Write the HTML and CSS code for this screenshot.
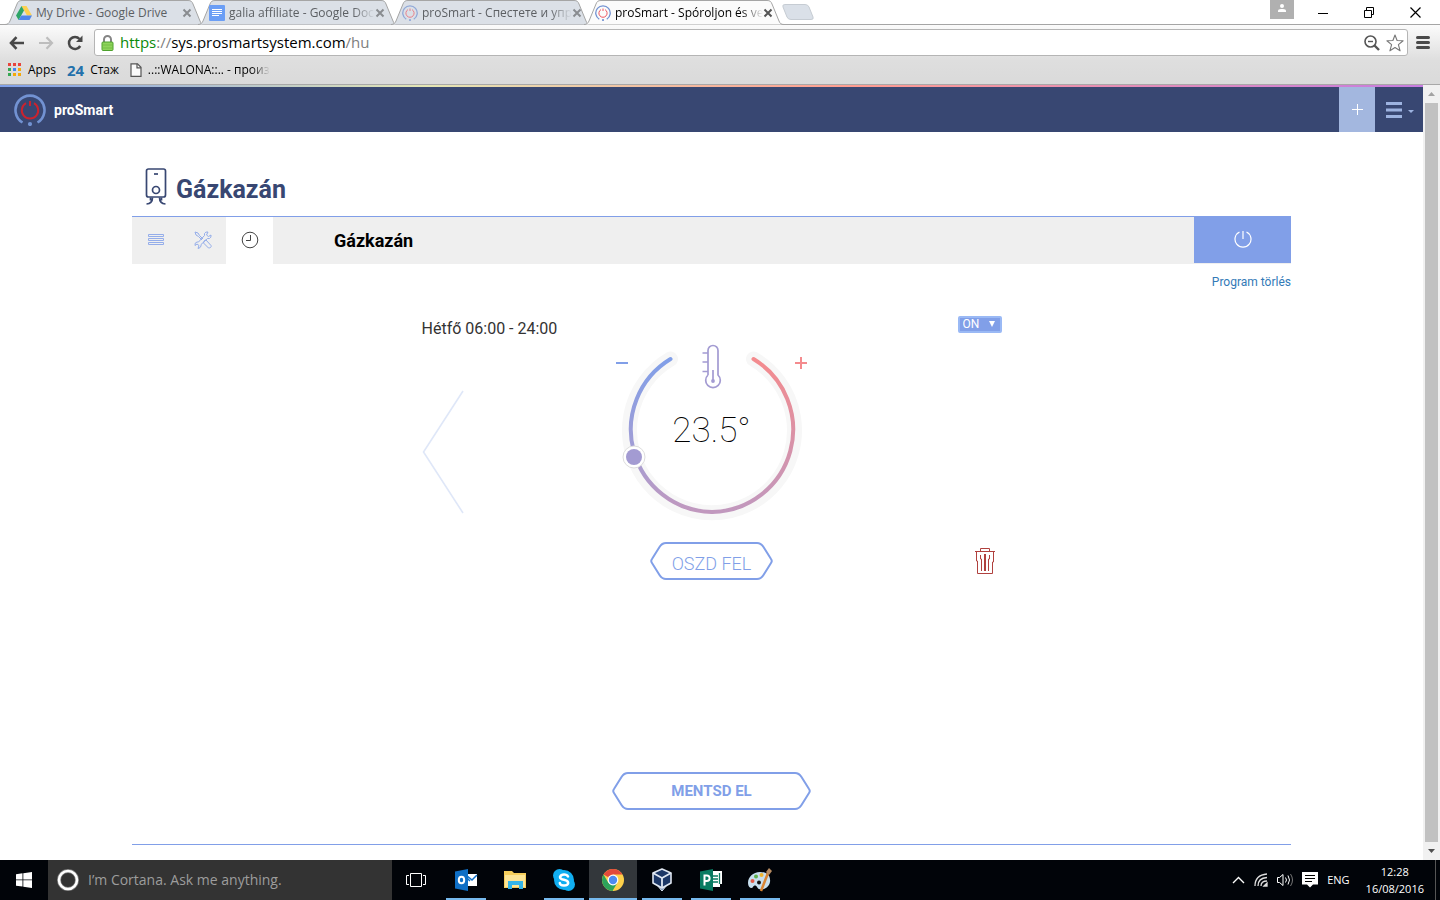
FILE: index.html
```html
<!DOCTYPE html>
<html lang="hu">
<head>
<meta charset="utf-8">
<title>proSmart</title>
<link rel="stylesheet" href="styles.css">
</head>
<body>
<svg class="defs" aria-hidden="true">
  <symbol id="tab-shape" viewBox="0 0 200 25">
    <path d="M0 24.500C3 24.500 4 23 5 21L12 4C13 1.500 14 .5 17 .5H183C186 .5 187 1.500 188 4L195 21C196 23.500 197 24.500 200 24.500" stroke="#a5a5a5"/>
  </symbol>
  <symbol id="close" viewBox="0 0 10 10"><path d="M1.500 1.500l7 7M8.500 1.500l-7 7" stroke="currentColor" stroke-width="2"/></symbol>
  <symbol id="brand" viewBox="0 0 32 32">
    <path d="M8.500 28.500A14.500 14.500 0 1 1 23.500 28.500" fill="none" stroke="#7292d2" stroke-width="2.600"/>
    <circle cx="16" cy="30" r="2.100" fill="#7292d2"/>
    <path d="M12 9.200A8.200 8.200 0 1 0 20 9.200" fill="none" stroke="var(--power, #c9232f)" stroke-width="2"/>
    <path d="M16 7v5" stroke="var(--power, #c9232f)" stroke-width="2"/>
  </symbol>
</svg>

<header class="browser">
  <div class="tabstrip">
    <div class="tab">
      <svg class="tab-bg"><use href="#tab-shape"/></svg>
      <svg class="favicon" viewBox="0 0 16 16"><path d="M5.500 1h5L16 10.500h-5z" fill="#fdd04f"/><path d="M5.500 1L0 10.500 2.600 15 8 5.500z" fill="#2ea567"/><path d="M5.300 10.500H16L13.500 15H2.600z" fill="#4f86ec"/></svg>
      <span class="tab-title">My Drive - Google Drive</span>
      <button class="tab-close" aria-label="Close tab"><svg><use href="#close"/></svg></button>
    </div>
    <div class="tab">
      <svg class="tab-bg"><use href="#tab-shape"/></svg>
      <svg class="favicon" viewBox="0 0 16 16"><rect width="16" height="16" rx="1" fill="#6b9ef5"/><path d="M3 4.500h10M3 6.500h10M3 8.500h10M3 10.500h7" stroke="#fff"/></svg>
      <span class="tab-title fade">galia affiliate - Google Doc</span>
      <button class="tab-close" aria-label="Close tab"><svg><use href="#close"/></svg></button>
    </div>
    <div class="tab faded">
      <svg class="tab-bg"><use href="#tab-shape"/></svg>
      <svg class="favicon"><use href="#brand"/></svg>
      <span class="tab-title fade">proSmart - Спестете и упр</span>
      <button class="tab-close" aria-label="Close tab"><svg><use href="#close"/></svg></button>
    </div>
    <div class="tab active">
      <svg class="tab-bg"><use href="#tab-shape"/></svg>
      <svg class="favicon"><use href="#brand"/></svg>
      <span class="tab-title fade">proSmart - Spóroljon és ve</span>
      <button class="tab-close" aria-label="Close tab"><svg><use href="#close"/></svg></button>
    </div>
    <button class="new-tab" aria-label="New tab"><svg width="32" height="16" viewBox="0 0 32 16"><path d="M3 .5H23Q26 .5 27 3L31 13Q32 15.500 29 15.500H9Q6 15.500 5 13L1 3Q0 .5 3 .5z" fill="#dae0e8" stroke="#c6ccd3"/></svg></button>
    <div class="window-buttons">
      <button class="profile" aria-label="Profile"><svg width="24" height="19" viewBox="0 0 24 19"><rect width="24" height="19" fill="#b0b0b0"/><circle cx="12" cy="6" r="2" fill="#fff"/><path d="M8 12v-1q0-2 3-2h2q3 0 3 2v1z" fill="#fff"/></svg></button>
      <button aria-label="Minimize"><svg width="10" height="11"><path d="M0 6.500h10" stroke="#000"/></svg></button>
      <button aria-label="Restore"><svg width="10" height="11" fill="none" stroke="#000"><path d="M.5 3.500h7v7h-7zM2.500 3V.5h7v7H8"/></svg></button>
      <button aria-label="Close"><svg width="11" height="11"><path d="M.5.5l10 10M10.500.5l-10 10" stroke="#000" stroke-width="1.200"/></svg></button>
    </div>
  </div>
  <div class="toolbar">
    <div class="address-row">
      <button aria-label="Back"><svg width="16" height="14" viewBox="0 0 16 14" fill="none" stroke="#484848" stroke-width="2.600"><path d="M15 7H2M7.500 1.200L2 7l5.500 5.800"/></svg></button>
      <button aria-label="Forward"><svg width="16" height="14" viewBox="0 0 16 14" fill="none" stroke="#bdbdbd" stroke-width="2.200"><path d="M1 7h13M8.500 1.200L14 7l-5.500 5.800"/></svg></button>
      <button aria-label="Reload"><svg width="16" height="16" viewBox="0 0 16 16"><path d="M13.200 11A6 6 0 1 1 12.500 4" fill="none" stroke="#484848" stroke-width="2.500"/><path d="M15.500.5V7H9z" fill="#484848"/></svg></button>
      <div class="omnibox">
        <svg width="13" height="16" viewBox="0 0 13 16"><path d="M3 8V4.500a3.500 3.500 0 0 1 7 0V8" fill="none" stroke="#858585" stroke-width="2"/><rect x="1" y="7" width="11" height="8.500" rx="1" fill="#8fd45c" stroke="#4da12d"/><path d="M2 10h9M2 13h9" stroke="#74bf44"/></svg>
        <span class="url"><span class="scheme">https</span><span class="dim">://</span>sys.prosmartsystem.com<span class="dim">/hu</span></span>
        <svg width="16" height="16" viewBox="0 0 16 16" fill="none" stroke="#555"><circle cx="6.500" cy="6.500" r="5.500" stroke-width="1.600"/><path d="M4 6.500h5" stroke-width="1.400"/><path d="M10.500 10.500l4.500 4.500" stroke-width="2.400"/></svg>
        <svg width="18" height="18" viewBox="0 0 18 18"><path d="M9 1l2.100 5.500 6 .3-4.700 3.800 1.700 6.200L9 13.500l-5.100 3.300 1.700-6.200L.9 6.800l6-.3z" fill="#fff" stroke="#777" stroke-width="1.100" stroke-linejoin="round"/></svg>
      </div>
      <button aria-label="Chrome menu"><svg width="14" height="13"><path d="M1.500 1.500h11M1.500 6.500h11M1.500 11.500h11" stroke="#4a4a4a" stroke-width="3" stroke-linecap="round"/></svg></button>
    </div>
    <nav class="bookmarks">
      <a href="#"><svg width="14" height="14" viewBox="0 0 14 14"><path d="M0 0h3v3H0zM5 0h3v3H5zM10 0h3v3h-3z" fill="#e8453c"/><path d="M0 5h3v3H0zM0 10h3v3H0z" fill="#36a852"/><path d="M5 5h3v3H5z" fill="#4285f4"/><path d="M10 5h3v3h-3zM5 10h3v3H5zM10 10h3v3h-3z" fill="#f5a90a"/></svg><span>Apps</span></a>
      <a href="#"><b class="mark24">24</b><span>Стаж</span></a>
      <a href="#"><svg width="12" height="14" viewBox="0 0 12 14" fill="#fafafa" stroke="#555" stroke-width="1.200"><path d="M1 .8h6.500L11 4.300v9H1z"/><path d="M7 .8v4h4" fill="none"/></svg><span class="fade">..::WALONA::.. - произ</span></a>
    </nav>
  </div>
</header>

<div class="viewport">
  <div class="site">
    <div class="site-nav">
      <a class="logo" href="#"><svg width="32" height="32"><use href="#brand"/></svg><span>proSmart</span></a>
      <button class="nav-add" aria-label="Add"><svg width="11" height="11"><path d="M0 5.500h11M5.500 0v11" stroke="#fff"/></svg></button>
      <button class="nav-menu" aria-label="Menu"><svg width="28" height="16" viewBox="0 0 28 16"><path d="M0 1.500h16M0 8h16M0 14.500h16" stroke="#9db3e0" stroke-width="3"/><path d="M22 8h6l-3 3z" fill="#9db3e0"/></svg></button>
    </div>
    <main class="page">
      <div class="page-head">
        <svg width="22" height="38" viewBox="0 0 22 38" fill="none" stroke="#384772" stroke-width="1.700"><rect x="1.500" y="1" width="19" height="28" rx="2"/><path d="M9 6h4"/><circle cx="11" cy="22" r="3.500"/><path d="M7.500 29.500q0 6-6 6.500M5.500 29.500v3M14.500 29.500q0 6 6 6.500M16.500 29.500v3"/></svg>
        <h1>Gázkazán</h1>
      </div>
      <section class="panel">
        <div class="panel-bar">
          <button class="panel-tab" aria-label="Lista"><svg width="16" height="12" fill="none" stroke="#94adea"><path d="M.5.5h15v2H.5zM.5 4.500h15v2H.5zM.5 8.500h15v2H.5z"/></svg></button>
          <button class="panel-tab" aria-label="Beállítások"><svg width="18" height="18" viewBox="0 0 18 18" fill="none" stroke="#94adea" stroke-linejoin="round"><path d="M1 1l3 1 1.500 2.500L9 8M1 1l1 3 2.500 1.500L8 9"/><path d="M10.500 9.500l1.500-.5 5 5.500q.5 1.500-.5 2t-2 .5L9.500 12l.5-1.500z"/><path d="M17 4l-2.500 1.500L12.500 4 14 1Q11.500.5 10.500 2.500v2L4.500 11H3Q.5 11.500 1 14.500L3 13l2 1.500L4 17.500q2.500-.5 3-2.500v-1.500L13.500 7.500h2Q17.500 6.500 17 4z"/></svg></button>
          <button class="panel-tab current" aria-label="Program"><svg width="18" height="18" fill="none" stroke="#444"><circle cx="9" cy="9" r="7.800"/><path d="M9.500 4v5.500H5"/></svg></button>
          <h2>Gázkazán</h2>
          <button class="power" aria-label="Be/Ki"><svg width="18" height="18" fill="none" stroke="#fff" stroke-width="1.200"><path d="M5.500 2A8 8 0 1 0 12.500 2M9 1v8"/></svg></button>
        </div>
        <a class="clear" href="#">Program törlés</a>

        <div class="program">
          <div class="slot-head">
            <span>Hétfő 06:00 - 24:00</span>
            <span class="state"><select aria-label="Állapot"><option>ON</option><option>OFF</option></select><svg width="6" height="6"><path d="M0 0h6L3 6z" fill="#fff"/></svg></span>
          </div>
          <button class="prev" aria-label="Előző"><svg width="42" height="124" viewBox="0 0 42 124"><path d="M41 1L1.500 62 41 123" fill="none" stroke="#dfe7f8" stroke-width="1.600"/></svg></button>
          <div class="dial">
            <svg width="200" height="178" viewBox="0 0 200 178" fill="none">
              <defs>
                <linearGradient id="cool" gradientUnits="userSpaceOnUse" x1="0" y1="16" x2="0" y2="169"><stop offset="0" stop-color="#819fe8"/><stop offset=".64" stop-color="#a59dd3"/><stop offset="1" stop-color="#c198be"/></linearGradient>
                <linearGradient id="warm" gradientUnits="userSpaceOnUse" x1="0" y1="16" x2="0" y2="169"><stop offset="0" stop-color="#f48b8e"/><stop offset="1" stop-color="#c198be"/></linearGradient>
              </defs>
              <path d="M58.500 16A82.500 82.500 0 1 0 141.500 16" stroke="#f7f7f7" stroke-width="15" stroke-linecap="round"/>
              <path d="M58.500 16A82.500 82.500 0 0 0 100 169" stroke="url(#cool)" stroke-width="4" stroke-linecap="round"/>
              <path d="M141.500 16A82.500 82.500 0 0 1 100 169" stroke="url(#warm)" stroke-width="4" stroke-linecap="round"/>
              <circle cx="22" cy="114" r="11" fill="#fff" stroke="#ddd"/>
              <circle cx="22" cy="114" r="8" fill="#a39bd2"/>
              <path d="M96 32V7.500a5 5 0 0 1 10 0V32a7.300 7.300 0 1 1-10 0M90.500 10H96M90.500 19H96M90.500 28.500H96M101 27v10" stroke="#a39bd2" stroke-width="1.700"/>
              <circle cx="101" cy="38" r="1.900" fill="#a39bd2"/>
            </svg>
            <output class="reading" for="temperature">23.5°</output>
            <input class="dial-input" id="temperature" type="range" min="5" max="60" step="0.5" value="23.5" aria-label="Hőmérséklet">
            <button class="step less" aria-label="Csökkent"><svg width="12" height="12"><path d="M0 6h12" stroke="#819fe8" stroke-width="2"/></svg></button>
            <button class="step more" aria-label="Növel"><svg width="12" height="12"><path d="M0 6h12M6 0v12" stroke="#f48b8e" stroke-width="2"/></svg></button>
          </div>
          <button class="hex split"><svg viewBox="0 0 123 38"><path d="M16 1H107Q111 1 113.500 5L121 17Q122.500 19 121 21L113.500 33Q111 37 107 37H16Q12 37 9.500 33L2 21Q.5 19 2 17L9.500 5Q12 1 16 1z"/></svg><span>OSZD FEL</span></button>
          <button class="trash" aria-label="Törlés"><svg width="20" height="27" viewBox="0 0 20 27" fill="none" stroke="#b0413e"><path d="M0 3.500h20M5.500 3V.5h9V3M1.500 4v9h1v12.500h15V14h1V4"/><path d="M5.500 7v4h1v12M14.500 7v4h-1v12"/><path d="M10 6v17" stroke-width="2"/></svg></button>
        </div>
        <button class="hex save"><svg viewBox="0 0 199 38"><path d="M16 1H183Q187 1 189.500 5L197 17Q198.500 19 197 21L189.500 33Q187 37 183 37H16Q12 37 9.500 33L2 21Q.5 19 2 17L9.500 5Q12 1 16 1z"/></svg><span>MENTSD EL</span></button>
      </section>
    </main>
  </div>
  <div class="scrollbar" aria-hidden="true">
    <svg width="7" height="4"><path d="M0 4L3.500 0 7 4z" fill="#a3a3a3"/></svg>
    <div class="thumb"></div>
    <svg width="7" height="4"><path d="M0 0h7L3.500 4z" fill="#505050"/></svg>
  </div>
</div>

<footer class="taskbar">
  <button class="app start" aria-label="Start"><svg width="16" height="16" viewBox="0 0 16 16" fill="#fff"><path d="M0 2.200L6.500 1.300v6.200H0zM7.300 1.200L16 0v7.500H7.300zM0 8.300h6.500v6.300L0 13.700zM7.300 8.300H16V16l-8.700-1.200z"/></svg></button>
  <label class="cortana"><svg width="22" height="22"><circle cx="11" cy="11" r="9" fill="none" stroke="#777" stroke-width="4"/><circle cx="11" cy="11" r="9" fill="none" stroke="#fff" stroke-width="2.600"/></svg><input type="text" placeholder="I’m Cortana. Ask me anything." aria-label="Search"></label>
  <button class="app view" aria-label="Task view"><svg width="20" height="14" fill="none" stroke="#fff"><path d="M4.500.5h11v13h-11zM3 2.500H.5v9H3M17 2.500h2.500v9H17"/></svg></button>
  <button class="app open" aria-label="Outlook"><svg width="24" height="24" viewBox="0 0 24 24"><path d="M12 6h11v12H12z" fill="#fff"/><path d="M12 7l6 5 5-5M13 10l3 3" fill="none" stroke="#0f6fc6" stroke-width="1.500"/><path d="M1 3.500L14 1v22L1 20.500z" fill="#0f6fc6"/><ellipse cx="7.500" cy="12" rx="2.700" ry="3.300" fill="none" stroke="#fff" stroke-width="2"/></svg></button>
  <button class="app" aria-label="File Explorer"><svg width="22" height="20" viewBox="0 0 22 20"><path d="M0 1h8l2 2h12v15H0z" fill="#f6ce5b"/><path d="M1 5h20v12H1z" fill="#fde596"/><path d="M4 11h15v8h-4v-4H8v4H4z" fill="#34b5e8"/></svg></button>
  <button class="app open" aria-label="Skype"><svg width="24" height="24" viewBox="0 0 24 24"><circle cx="12" cy="12" r="10" fill="#11aef0"/><circle cx="7.500" cy="7.500" r="6.500" fill="#11aef0"/><circle cx="16.500" cy="16.500" r="6.500" fill="#11aef0"/><path d="M16 8.500Q15 6.500 12 6.500T8 9Q8 11 12 11.800T16.200 15Q16 17.500 12 17.500T7.800 15" fill="none" stroke="#fff" stroke-width="2.500" stroke-linecap="round"/></svg></button>
  <button class="app open focused" aria-label="Chrome"><svg width="22" height="22" viewBox="0 0 22 22"><circle cx="11" cy="11" r="11" fill="#fdd04a"/><path d="M11 11L1.500 5.500A11 11 0 0 1 20.500 5.500H11z" fill="#e24a3b"/><path d="M1.500 5.500A11 11 0 0 0 10.500 22L15.500 13.500 11 11 6.500 14z" fill="#2da35b"/><circle cx="11" cy="11" r="5.400" fill="#fff"/><circle cx="11" cy="11" r="4.200" fill="#4e8bf0"/></svg></button>
  <button class="app open" aria-label="VirtualBox"><svg width="22" height="24" viewBox="0 0 22 24" stroke="#dfe7f2" stroke-linejoin="round"><path d="M6 17l5 6 5-6z" fill="#6d87ae"/><path d="M11 1l9 4v10l-9 5-9-5V5z" fill="#1c3766" stroke-width="1.600"/><path d="M2 5l9 5 9-5M11 10v10" fill="none" stroke-width="1.800"/></svg></button>
  <button class="app open" aria-label="Publisher"><svg width="24" height="24" viewBox="0 0 24 24"><path d="M14 3h9v13h-2v3h-7z" fill="#fff"/><path d="M14 8h5M14 11h5M14 14h5M20.500 5v11" stroke="#087b62" stroke-width="1.300"/><path d="M1 3.500L14 1v22L1 20.500z" fill="#087b62"/><path d="M5.500 17.500v-10h2.300a2.800 2.800 0 0 1 0 5.600H5.500" fill="none" stroke="#fff" stroke-width="2"/></svg></button>
  <button class="app open" aria-label="Paint"><svg width="24" height="24" viewBox="0 0 24 24"><path d="M12 4C5 4 0 9 0 15c0 5 4 6 5 4s3-2 4 0c2 5 12 2 13-5S18 4 12 4z" fill="#c7dfee"/><circle cx="4.500" cy="13" r="2" fill="#e35b47"/><circle cx="8" cy="8.500" r="2" fill="#5fb04c"/><circle cx="13.500" cy="7" r="2" fill="#f0b52f"/><circle cx="11" cy="14.500" r="2" fill="#111"/><path d="M13 23L20 5" stroke="#d98534" stroke-width="2.500"/><path d="M18 4l3-4 3 3-3 4z" fill="#b58a61"/></svg></button>
  <div class="tray">
    <svg width="13" height="8" fill="none" stroke="#fff" stroke-width="1.400"><path d="M1 7l5.500-5.500L12 7"/></svg>
    <svg width="14" height="14" viewBox="0 0 14 14" fill="none" stroke="#ddd" stroke-width="1.300"><path d="M1 13Q1 2 13 1M4 13Q4 5 13 4.500M7 13q0-5 6-5"/><path d="M10 13l3-3v3z" fill="#fff"/></svg>
    <svg width="16" height="14" viewBox="0 0 16 14" fill="none" stroke="#fff"><path d="M.5 4.500h2L6 1.500v11L2.500 9.500h-2z"/><path d="M8.500 4.500q2 2.500 0 5M11 2.500q3 4.500 0 9"/><path d="M13.500 1q4 6 0 12" stroke="#777"/></svg>
    <svg width="16" height="16" viewBox="0 0 16 16"><path d="M0 0h16v12.500h-5L8 15.500 5 12.500H0z" fill="#fff"/><path d="M3 3.500h10M3 6.500h10M3 9.500h7" stroke="#000"/></svg>
    <span>ENG</span>
  </div>
  <time class="clock"><span>12:28</span><span>16/08/2016</span></time>
</footer>
</body>
</html>
```
FILE: styles.css
```css
* { box-sizing: border-box; }
body {
  margin: 0;
  min-height: 100vh;
  display: flex;
  flex-direction: column;
  background: #fff;
  font: 12px/16px "Open Sans", "Noto Sans", sans-serif;
  color: #000;
}
button {
  display: flex;
  align-items: center;
  justify-content: center;
  padding: 0;
  border: 0;
  background: none;
  font: inherit;
  color: inherit;
}
a { color: inherit; text-decoration: none; }
svg { flex: none; }
.defs { position: absolute; width: 0; height: 0; }

/* Browser frame */
.tabstrip { display: flex; height: 25px; padding-left: 5px; border-bottom: 1px solid #a5a5a5; }
.tab {
  position: relative;
  display: flex;
  align-items: center;
  width: 200px;
  height: 25px;
  margin-right: -7px;
  padding: 1px 13px 1px 11px;
  color: #5c5f63;
  fill: #dbe0e7;
}
.tab.active { z-index: 1; color: #000; fill: #fbfbfb; }
.tab-bg { position: absolute; inset: 0; width: 200px; height: 25px; }
.favicon { position: relative; width: 16px; height: 16px; --power: #ee5560; }
.faded .favicon { opacity: 0.7; }
.tab-title { position: relative; flex: 1; margin-left: 4px; white-space: nowrap; }
.fade { mask-image: linear-gradient(90deg, #000 85%, transparent); }
.tab-close { position: relative; color: #898c90; }
.tab-close svg { width: 10px; height: 10px; }
.active .tab-close { color: #555; }
.new-tab { margin-left: 5px; }
.window-buttons { display: flex; flex: 1; justify-content: flex-end; padding-right: 2px; }
.window-buttons button { width: 46px; }
.window-buttons .profile { width: 24px; margin-right: 6px; align-items: flex-start; }
.toolbar {
  padding-top: 4px;
  height: 60px;
  background: linear-gradient(#fbfbfb, #dedede 60%, #dadada);
  border-bottom: 1px solid #a8a8a8;
}
.address-row { display: flex; align-items: center; padding: 0 10px 0 9px; }
.address-row > button { width: 16px; margin-right: 13px; }
.address-row > button:nth-child(3) { margin-right: 11px; }
.address-row > button:last-child { margin: 0 0 0 8px; width: 14px; }
.omnibox {
  flex: 1;
  display: flex;
  align-items: center;
  gap: 6px;
  height: 27px;
  padding: 0 3px 0 6px;
  border: 1px solid #b5b5b5;
  border-radius: 3px;
  background: #fff;
}
.url { flex: 1; padding-bottom: 2px; font-size: 15px; line-height: 20px; }
.scheme { color: #0a8a0a; }
.dim { color: #808080; }
.bookmarks { display: flex; gap: 11px; height: 28px; padding-left: 8px; }
.bookmarks a { display: flex; align-items: center; gap: 6px; }
.mark24 { color: #2371ab; font-size: 15px; }

/* Site */
.viewport { flex: 1; display: flex; }
.site {
  flex: 1;
  display: flex;
  flex-direction: column;
  font-family: Roboto, sans-serif;
}
.site-nav {
  display: flex;
  height: 47px;
  border-top: 2px solid;
  border-image: linear-gradient(90deg, #7f9fea, #e4e6b4 30%, #ff9c90 60%, #c67ce0) 1;
  background: #384772;
}
.logo { flex: 1; display: flex; align-items: center; gap: 8px; padding-left: 14px; color: #fff; font-size: 14px; font-weight: 700; }
.nav-add { width: 36px; background: #a3b7df; }
.nav-menu { width: 48px; padding-left: 2px; }
.page {
  flex: 1;
  display: flex;
  flex-direction: column;
  width: 100%;
  max-width: 1159px;
  margin: 0 auto;
  padding: 34px 0 15px;
}
.page-head { display: flex; align-items: center; gap: 9px; height: 50px; padding: 0 13px 8px; }
h1 { margin: 6px 0 0; color: #384772; font-size: 25px; line-height: 30px; font-weight: 700; }
.panel {
  flex: 1;
  display: flex;
  flex-direction: column;
  border: solid #819fe8;
  border-width: 1px 0;
}
.panel-bar { display: flex; height: 47px; background: #efefef; }
.panel-tab { width: 47px; padding-bottom: 2px; }
.current { background: #fff; }
h2 { flex: 1; margin: 0 61px; font-size: 18px; line-height: 47px; font-weight: 700; }
.power { width: 97px; height: 46px; padding-bottom: 2px; background: #819fe8; }
.clear { align-self: flex-end; margin-top: 9px; color: #337ab7; font-size: 12px; line-height: 18px; }
.program {
  display: grid;
  grid-template-columns: 1fr auto 1fr;
  width: 580px;
  max-width: 100%;
  margin: 25px auto 40px;
}
.slot-head {
  grid-column: 1 / -1;
  display: flex;
  justify-content: space-between;
  height: 27px;
  color: #333;
  font-size: 16px;
  line-height: 25px;
}
.state { position: relative; height: 18px; }
.state select {
  display: block;
  width: 44px;
  height: 17px;
  padding: 0 3px;
  appearance: none;
  border: 2px solid #9ab9f5;
  border-radius: 2px;
  background: #819fe8;
  color: #fff;
  font: 12px/13px Roboto, sans-serif;
}
.state svg { position: absolute; right: 7px; top: 5px; }
.prev { align-self: start; justify-self: start; margin-top: 47px; }
.dial { position: relative; width: 200px; height: 178px; }
.reading {
  position: absolute;
  inset: 0;
  text-align: center;
  font-size: 35px;
  line-height: 176px;
  font-weight: 100;
  color: #000;
}
.dial-input { position: absolute; left: 30px; top: 70px; width: 140px; height: 40px; margin: 0; opacity: 0; }
.step { position: absolute; top: 14px; }
.less { left: 4px; }
.more { right: 5px; }
.hex { position: relative; height: 38px; color: #819fe8; }
.hex svg { position: absolute; inset: 0; width: 100%; height: 100%; fill: #fff; stroke: #819fe8; stroke-width: 2; }
.hex span { position: relative; }
.split { grid-column: 2; justify-self: center; width: 123px; margin-top: 21px; font-size: 18px; font-weight: 300; line-height: 20px; padding-top: 5px; }
.trash { align-self: center; justify-self: end; margin: 21px 7px 0 0; }
.save { align-self: center; width: 199px; margin: auto 0 34px; font-size: 15px; font-weight: 700; }
.scrollbar {
  display: flex;
  flex-direction: column;
  align-items: center;
  gap: 7px;
  width: 17px;
  padding: 7px 0;
  background: #f1f1f1;
}
.thumb { flex: 1; width: 13px; background: #c1c1c1; }

/* Taskbar */
.taskbar { display: flex; height: 40px; background: #010409; color: #fff; }
.app { width: 48px; margin-right: 1px; }
.start { margin: 0; }
.view { margin-right: 2px; }
.open { background: linear-gradient(#76b9ed, #76b9ed) center bottom / 40px 2px no-repeat; }
.focused { background-color: #33373b; background-size: 48px 2px; }
.cortana { display: flex; align-items: center; gap: 9px; width: 344px; padding-left: 9px; background: #333; }
.cortana input { flex: 1; min-width: 0; padding: 0; border: 0; outline: 0; background: none; font: 14px/20px "Open Sans", "Noto Sans", sans-serif; color: #fff; }
.cortana input::placeholder { color: #9d9d9d; opacity: 1; }
.tray { flex: 1; display: flex; align-items: center; justify-content: flex-end; gap: 9px; font-size: 11px; }
.clock {
  display: flex;
  flex-direction: column;
  justify-content: center;
  align-items: center;
  margin: 0 4px 0 16px;
  padding-right: 11px;
  border-right: 1px solid #555;
  font-size: 11px;
  line-height: 17px;
}
```
